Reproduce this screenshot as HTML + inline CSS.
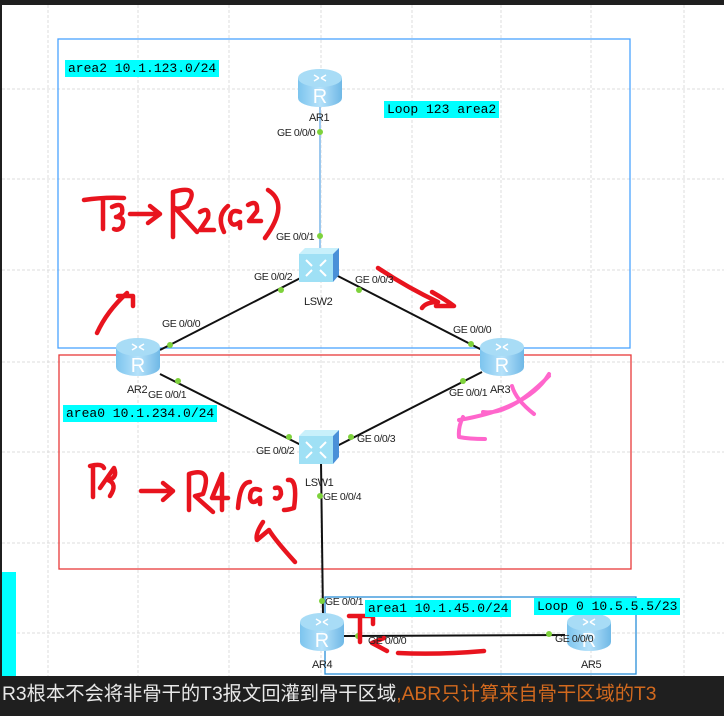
<!DOCTYPE html>
<html><head><meta charset="utf-8"><style>
body{margin:0;width:724px;height:716px;overflow:hidden;background:#fff;position:relative;font-family:"Liberation Sans",sans-serif}
.lbl{position:absolute;background:#00ffff;font-family:"Liberation Mono",monospace;font-size:13px;line-height:17px;padding:0 3px;color:#000;white-space:pre}
.t{position:absolute;font-size:10.5px;color:#222;letter-spacing:-0.4px;white-space:pre}
.bar{position:absolute;left:0;top:676px;width:724px;height:40px;background:#1f1f1f;font-family:"Liberation Sans","Noto Sans CJK SC",sans-serif;font-size:19.3px;line-height:38px;color:#e8e8e8;padding-left:2px;white-space:nowrap}
</style></head><body>
<svg width="724" height="716" style="position:absolute;left:0;top:0">
<defs>
<linearGradient id="rg" x1="0" x2="1"><stop offset="0" stop-color="#7cc4ee"/><stop offset=".5" stop-color="#b6e2fa"/><stop offset="1" stop-color="#6fb8e6"/></linearGradient>
<g id="rt">
<path d="M-22,-10 V10 A22,9 0 0 0 22,10 V-10 Z" fill="url(#rg)"/>
<ellipse cx="0" cy="-10" rx="22" ry="9" fill="#a8dcf6"/>
<text x="0" y="15" font-size="20" fill="#fff" text-anchor="middle" font-family="Liberation Sans">R</text>
<path d="M-6,-13 l5,3 M6,-13 l-5,3 M-6,-7 l5,-3 M6,-7 l-5,-3" stroke="#fff" stroke-width="1.5"/>
</g>
<g id="sw">
<path d="M-21,-14 l6,-6 h34 l-6,6 z" fill="#c8f0fb"/>
<path d="M13,-14 l6,-6 v27 l-6,7 z" fill="#4a90d8"/>
<rect x="-21" y="-14" width="34" height="28" fill="#9fe0f5"/>
<path d="M-14,-8 l6,6 M6,-8 l-6,6 M-14,8 l6,-6 M6,8 l-6,-6" stroke="#fff" stroke-width="2"/>
</g>
</defs>
<rect x="0" y="0" width="724" height="5" fill="#1f1f1f"/>
<rect x="0" y="0" width="2" height="716" fill="#1f1f1f"/>
<g stroke="#dcdcdc" stroke-dasharray="3,2" stroke-width="1">
<line x1="48" y1="5" x2="48" y2="676"/><line x1="138" y1="5" x2="138" y2="676"/><line x1="229" y1="5" x2="229" y2="676"/><line x1="321" y1="5" x2="321" y2="676"/><line x1="412" y1="5" x2="412" y2="676"/><line x1="501" y1="5" x2="501" y2="676"/><line x1="591" y1="5" x2="591" y2="676"/><line x1="684" y1="5" x2="684" y2="676"/>
<line x1="2" y1="89" x2="724" y2="89"/><line x1="2" y1="179" x2="724" y2="179"/><line x1="2" y1="270" x2="724" y2="270"/><line x1="2" y1="362" x2="724" y2="362"/><line x1="2" y1="452" x2="724" y2="452"/><line x1="2" y1="543" x2="724" y2="543"/><line x1="2" y1="633" x2="724" y2="633"/>
</g>
<rect x="58" y="39" width="572" height="309" fill="none" stroke="#4aa3ff" stroke-width="1.3"/>
<rect x="59" y="355" width="572" height="214" fill="none" stroke="#e83a3a" stroke-width="1.3"/>
<rect x="325" y="597" width="311" height="77" fill="none" stroke="#2a8fd8" stroke-width="1.3"/>
<rect x="2" y="572" width="14" height="104" fill="#00ffff"/>
<g stroke="#111" stroke-width="2" fill="none">
<line x1="160" y1="350" x2="320" y2="268"/>
<line x1="330" y1="272" x2="482" y2="350"/>
<line x1="160" y1="374" x2="305" y2="447"/>
<line x1="335" y1="447" x2="482" y2="372"/>
<line x1="321" y1="462" x2="323" y2="615"/>
<line x1="344" y1="636" x2="565" y2="635"/>
</g>
<line x1="320" y1="100" x2="320" y2="252" stroke="#9cc8ee" stroke-width="2"/>
<g fill="#7ed23c">
<circle cx="320" cy="132" r="3"/><circle cx="320" cy="236" r="3"/><circle cx="281" cy="290" r="3"/><circle cx="359" cy="290" r="3"/><circle cx="170" cy="345" r="3"/><circle cx="471" cy="344" r="3"/><circle cx="178" cy="381" r="3"/><circle cx="463" cy="381" r="3"/><circle cx="289" cy="437" r="3"/><circle cx="351" cy="437" r="3"/><circle cx="320" cy="496" r="3"/><circle cx="322" cy="601" r="3"/><circle cx="358" cy="636" r="3"/><circle cx="549" cy="634" r="3"/>
</g>
<use href="#rt" x="320" y="88"/>
<use href="#rt" x="138" y="357"/>
<use href="#rt" x="502" y="357"/>
<use href="#rt" x="322" y="632"/>
<use href="#rt" x="589" y="632"/>
<use href="#sw" x="320" y="268"/>
<use href="#sw" x="320" y="450"/>
<g stroke="#e8141e" stroke-width="4.5" fill="none" stroke-linecap="round" stroke-linejoin="round">
<path d="M84,200 q20,-3 40,-2 M103,199 v30 M112,207 q12,-6 10,6 q-4,4 -6,4 q10,0 6,10 q-4,4 -8,2"/>
<path d="M130,214 h28 M150,206 l10,8 l-12,9"/>
<path d="M173,237 V192 q28,-8 14,14 q-8,4 -12,2 l22,24"/>
<path d="M200,212 q10,-6 8,6 l-8,12 h14"/>
<path d="M228,206 q-12,10 -4,26 M240,212 q-10,-4 -10,8 q2,8 10,2 v6 M248,205 q10,-6 9,6 l-8,10 h12 M268,190 q22,14 -3,48"/>
<path d="M97,333 q10,-22 30,-40 M118,296 h15 v10"/>
<path d="M378,268 q30,20 60,34 q-12,0 -16,6 M432,292 q14,8 22,14 l-18,0"/>
<path d="M90,466 q12,-3 14,2 M93,467 v30 M100,488 l14,-20 q4,10 -6,12 q10,4 2,16"/>
<path d="M141,491 h32 M163,483 l10,8 l-10,9"/>
<path d="M189,510 V474 q24,-8 14,20 l-8,2 l18,16 M222,510 V474 l-10,24 h16"/>
<path d="M250,482 q-10,0 -12,26 M260,490 q-10,-4 -10,8 q2,8 10,0 v6 M275,488 q6,-2 6,6 q-2,6 -6,4 M288,480 q10,-2 6,28 q-6,2 -10,2"/>
<path d="M263,522 q-8,12 -6,18 l12,-10 q6,10 26,32"/>
<path d="M349,616 h22 M360,618 v24 M373,618 v6"/>
<path d="M384,638 l-12,5 l15,8 M398,653 q40,2 86,-2"/>
</g>
<g stroke="#ff66cc" stroke-width="4" fill="none" stroke-linecap="round" stroke-linejoin="round">
<path d="M549,374 q-20,34 -90,46 M463,417 q-5,10 -4,20 q10,2 26,2 M512,386 q4,14 22,28 M549,376 q-40,40 -66,36"/>
</g>
</svg>
<div class="lbl" style="left:65px;top:60px">area2 10.1.123.0/24</div>
<div class="lbl" style="left:384px;top:101px">Loop 123 area2</div>
<div class="lbl" style="left:63px;top:405px">area0 10.1.234.0/24</div>
<div class="lbl" style="left:365px;top:600px">area1 10.1.45.0/24</div>
<div class="lbl" style="left:534px;top:598px">Loop 0 10.5.5.5/23</div>
<div class="t" style="left:309px;top:112px;font-size:11px">AR1</div>
<div class="t" style="left:277px;top:127px">GE 0/0/0</div>
<div class="t" style="left:276px;top:231px">GE 0/0/1</div>
<div class="t" style="left:254px;top:271px">GE 0/0/2</div>
<div class="t" style="left:355px;top:274px">GE 0/0/3</div>
<div class="t" style="left:304px;top:296px;font-size:11px">LSW2</div>
<div class="t" style="left:162px;top:318px">GE 0/0/0</div>
<div class="t" style="left:453px;top:324px">GE 0/0/0</div>
<div class="t" style="left:127px;top:384px;font-size:11px">AR2</div>
<div class="t" style="left:148px;top:389px">GE 0/0/1</div>
<div class="t" style="left:449px;top:387px">GE 0/0/1</div>
<div class="t" style="left:490px;top:384px;font-size:11px">AR3</div>
<div class="t" style="left:256px;top:445px">GE 0/0/2</div>
<div class="t" style="left:357px;top:433px">GE 0/0/3</div>
<div class="t" style="left:305px;top:477px;font-size:11px">LSW1</div>
<div class="t" style="left:323px;top:491px">GE 0/0/4</div>
<div class="t" style="left:325px;top:596px">GE 0/0/1</div>
<div class="t" style="left:368px;top:635px">GE 0/0/0</div>
<div class="t" style="left:555px;top:633px">GE 0/0/0</div>
<div class="t" style="left:312px;top:659px;font-size:11px">AR4</div>
<div class="t" style="left:581px;top:659px;font-size:11px">AR5</div>
<div class="bar">R3根本不会将非骨干的T3报文回灌到骨干区域<span style="color:#d2691e">,ABR只计算来自骨干区域的T3</span></div>
</body></html>
